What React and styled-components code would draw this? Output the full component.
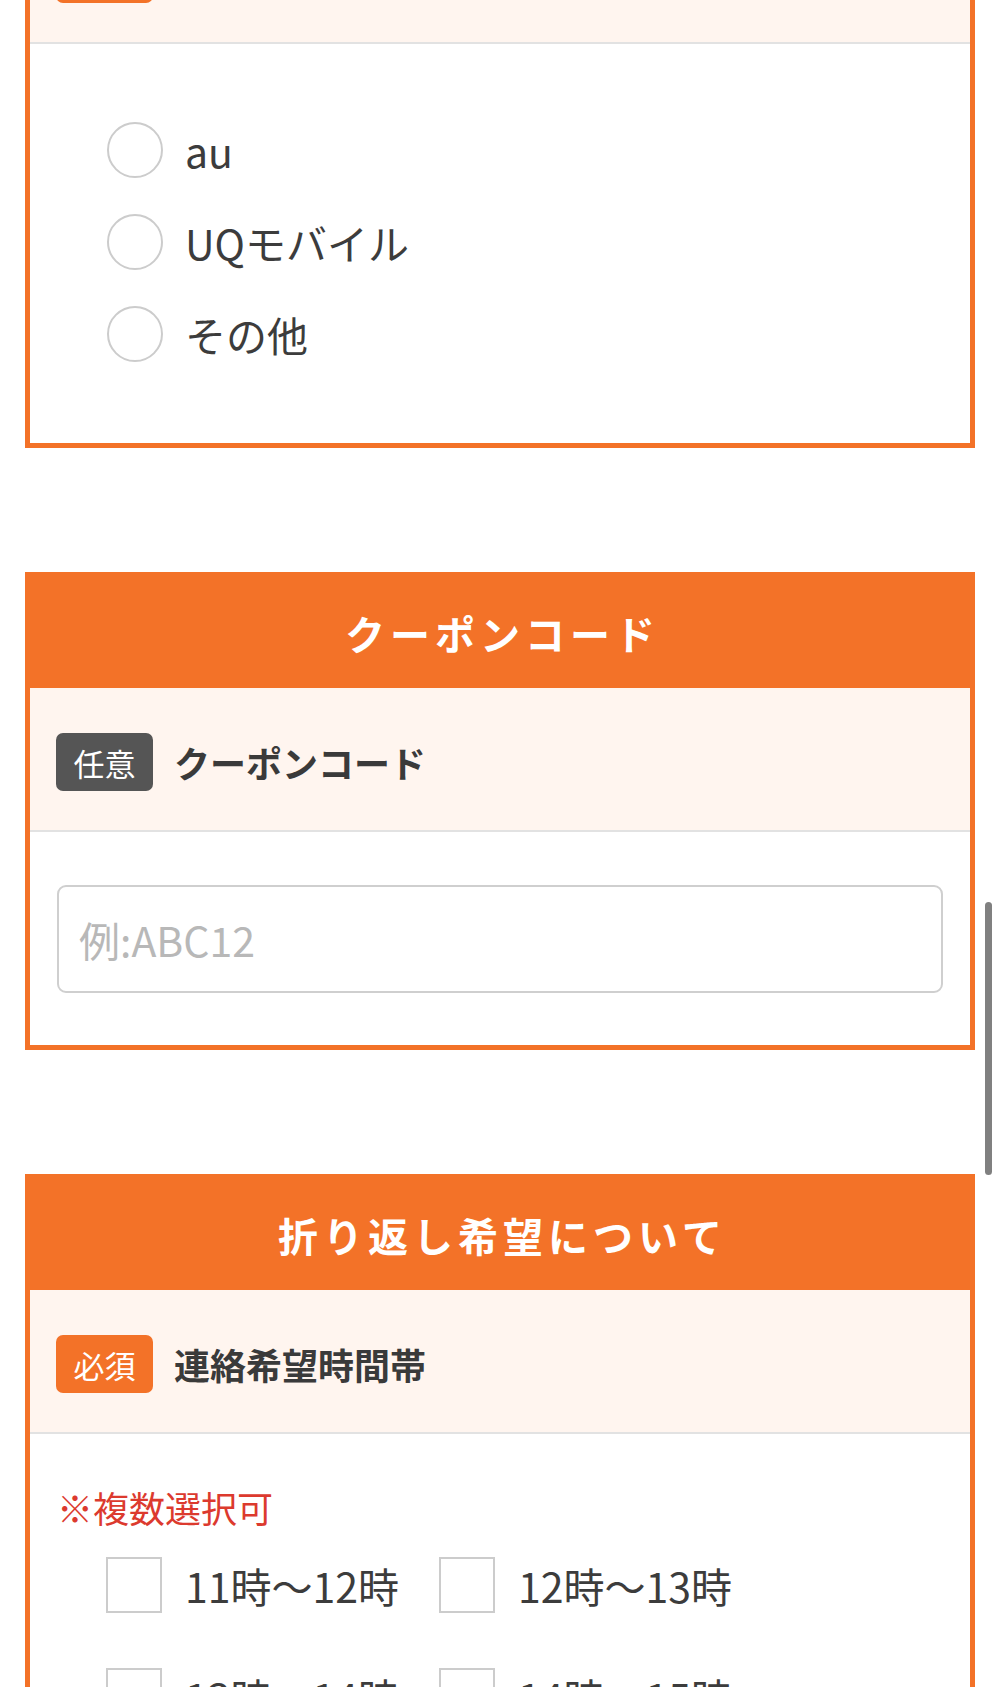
import React from "react";
import styled, { createGlobalStyle } from "styled-components";

const GlobalStyle = createGlobalStyle`
  html, body {
    margin: 0;
    padding: 0;
    background: #ffffff;
  }
  body {
    font-family: "Noto Sans CJK JP", "Noto Sans", sans-serif;
    color: #3c3c3c;
    overflow: hidden;
  }
  * { box-sizing: border-box; }
`;

const ORANGE = "#f37228";

const Page = styled.div`
  display: flex;
  flex-direction: column;
  gap: 124px;
  padding: 0 25px 200px;
  margin-top: -216px;
`;

const Card = styled.section`
  border: 5px solid ${ORANGE};
  background: #ffffff;
`;

const CardHeader = styled.h2`
  margin: 0;
  height: 111px;
  display: flex;
  align-items: center;
  justify-content: center;
  background: ${ORANGE};
  color: #ffffff;
  font-size: 40px;
  font-weight: 700;
  letter-spacing: 5px;
  padding-left: 5px;
`;

const LabelRow = styled.div`
  height: 144px;
  display: flex;
  align-items: center;
  gap: 21px;
  padding: 6px 0 0 26px;
  background: #fff5ef;
  border-bottom: 2px solid #e2e2e2;
`;

const Badge = styled.span`
  display: inline-flex;
  align-items: center;
  justify-content: center;
  width: 97px;
  height: 58px;
  border-radius: 7px;
  background: ${(p) => (p.$required ? ORANGE : "#555555")};
  color: #ffffff;
  font-size: 31px;
  font-weight: 400;
`;

const LabelText = styled.span`
  font-size: 36px;
  font-weight: 700;
  color: #3a3a3a;
`;

const Body = styled.div`
  padding: ${(p) => p.$pad || "53px 27px 52px"};
`;

const RadioList = styled.div`
  display: flex;
  flex-direction: column;
  padding-left: 50px;
`;

const RadioRow = styled.label`
  height: 92px;
  display: flex;
  align-items: center;
  gap: 22px;
  font-size: 41px;
  line-height: 1;
  color: #3c3c3c;
`;

const RadioDot = styled.input.attrs({ type: "radio" })`
  appearance: none;
  margin: 0;
  width: 56px;
  height: 56px;
  border: 2px solid #cccccc;
  border-radius: 50%;
  background: #ffffff;
  flex-shrink: 0;
`;

const TextInput = styled.input`
  display: block;
  width: 100%;
  height: 108px;
  border: 2px solid #cfcfcf;
  border-radius: 9px;
  padding: 0 20px;
  font-family: inherit;
  font-size: 41px;
  color: #3c3c3c;
  background: #ffffff;
  &::placeholder {
    color: #b8b8b8;
  }
`;

const Note = styled.p`
  margin: 0 0 21px;
  font-size: 36px;
  line-height: 54px;
  color: #dc3a2e;
`;

const CheckGrid = styled.div`
  display: flex;
  flex-wrap: wrap;
  column-gap: 40px;
  row-gap: 51px;
  padding-left: 49px;
`;

const CheckRow = styled.label`
  display: flex;
  align-items: center;
  gap: 23px;
  font-size: 41px;
  color: #3c3c3c;
`;

const CheckBox = styled.input.attrs({ type: "checkbox" })`
  appearance: none;
  margin: 0;
  width: 56px;
  height: 56px;
  border: 2px solid #cccccc;
  background: #ffffff;
  flex-shrink: 0;
`;

const ScrollThumb = styled.div`
  position: fixed;
  top: 902px;
  right: 8px;
  width: 7px;
  height: 273px;
  border-radius: 4px;
  background: #808080;
`;

const carriers = ["au", "UQモバイル", "その他"];
const times = ["11時〜12時", "12時〜13時", "13時〜14時", "14時〜15時"];

export default function App() {
  return (
    <>
      <GlobalStyle />
      <Page>
        <Card>
          <CardHeader>現在のご利用状況</CardHeader>
          <LabelRow>
            <Badge $required>必須</Badge>
            <LabelText>現在ご利用中の携帯会社</LabelText>
          </LabelRow>
          <Body $pad="60px 27px 63px">
            <RadioList>
              {carriers.map((c) => (
                <RadioRow key={c}>
                  <RadioDot name="carrier" />
                  {c}
                </RadioRow>
              ))}
            </RadioList>
          </Body>
        </Card>

        <Card>
          <CardHeader>クーポンコード</CardHeader>
          <LabelRow>
            <Badge>任意</Badge>
            <LabelText>クーポンコード</LabelText>
          </LabelRow>
          <Body>
            <TextInput placeholder="例:ABC12" />
          </Body>
        </Card>

        <Card>
          <CardHeader>折り返し希望について</CardHeader>
          <LabelRow>
            <Badge $required>必須</Badge>
            <LabelText>連絡希望時間帯</LabelText>
          </LabelRow>
          <Body $pad="46px 27px 60px">
            <Note>※複数選択可</Note>
            <CheckGrid>
              {times.map((t) => (
                <CheckRow key={t}>
                  <CheckBox />
                  {t}
                </CheckRow>
              ))}
            </CheckGrid>
          </Body>
        </Card>
      </Page>
      <ScrollThumb />
    </>
  );
}
